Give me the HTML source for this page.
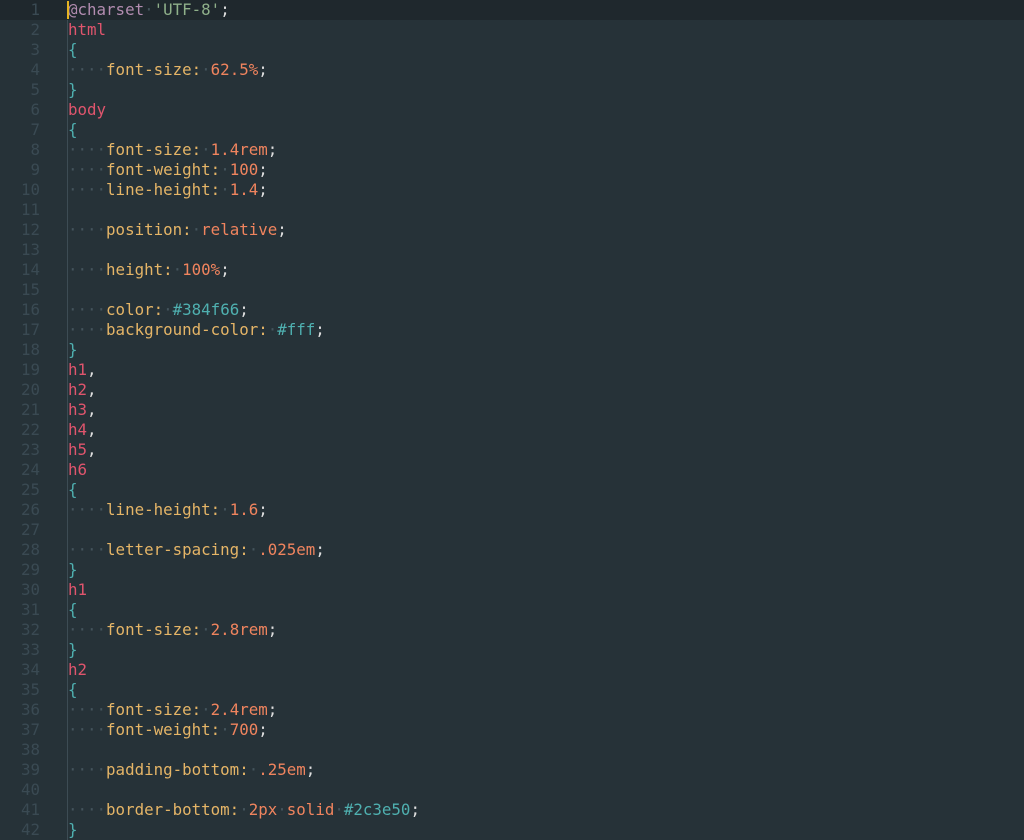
<!DOCTYPE html>
<html><head><meta charset="utf-8"><style>
html,body{margin:0;padding:0;background:#263238;width:1024px;height:840px;overflow:hidden}
.w{position:relative;font-family:"DejaVu Sans Mono","Liberation Mono",monospace;font-size:15.8px;}
.l{height:20px;line-height:20px;white-space:pre;position:relative}
.l1{background:#1f282d}
.n{position:absolute;left:0;width:40px;text-align:right;color:#3a4a53}
.c{position:absolute;left:68px;color:#cfd8dc}
.g{position:absolute;left:67px;top:0;width:1px;height:840px;background:#3d4c54}
.cur{position:absolute;left:67px;top:1px;width:2px;height:18px;background:#e6b422}
.d{color:#44545c}.p{color:#e5b567}.v{color:#f0845e}.h{color:#4fb0b0}.s{color:#e0556d}.b{color:#4fb0b0}.a{color:#b28cb0}.t{color:#8fb08a}.x{color:#e0e0e0}
</style></head><body><div class="w">
<div class="g"></div>
<div class="l l1"><span class="n">1</span><span class="c"><span class="a">@charset</span><span class="d">·</span><span class="t">'UTF-8'</span><span class="x">;</span></span><div class="cur"></div></div>
<div class="l"><span class="n">2</span><span class="c"><span class="s">html</span></span></div>
<div class="l"><span class="n">3</span><span class="c"><span class="b">{</span></span></div>
<div class="l"><span class="n">4</span><span class="c"><span class="d">····</span><span class="p">font-size:</span><span class="d">·</span><span class="v">62.5%</span><span class="x">;</span></span></div>
<div class="l"><span class="n">5</span><span class="c"><span class="b">}</span></span></div>
<div class="l"><span class="n">6</span><span class="c"><span class="s">body</span></span></div>
<div class="l"><span class="n">7</span><span class="c"><span class="b">{</span></span></div>
<div class="l"><span class="n">8</span><span class="c"><span class="d">····</span><span class="p">font-size:</span><span class="d">·</span><span class="v">1.4rem</span><span class="x">;</span></span></div>
<div class="l"><span class="n">9</span><span class="c"><span class="d">····</span><span class="p">font-weight:</span><span class="d">·</span><span class="v">100</span><span class="x">;</span></span></div>
<div class="l"><span class="n">10</span><span class="c"><span class="d">····</span><span class="p">line-height:</span><span class="d">·</span><span class="v">1.4</span><span class="x">;</span></span></div>
<div class="l"><span class="n">11</span></div>
<div class="l"><span class="n">12</span><span class="c"><span class="d">····</span><span class="p">position:</span><span class="d">·</span><span class="v">relative</span><span class="x">;</span></span></div>
<div class="l"><span class="n">13</span></div>
<div class="l"><span class="n">14</span><span class="c"><span class="d">····</span><span class="p">height:</span><span class="d">·</span><span class="v">100%</span><span class="x">;</span></span></div>
<div class="l"><span class="n">15</span></div>
<div class="l"><span class="n">16</span><span class="c"><span class="d">····</span><span class="p">color:</span><span class="d">·</span><span class="h">#384f66</span><span class="x">;</span></span></div>
<div class="l"><span class="n">17</span><span class="c"><span class="d">····</span><span class="p">background-color:</span><span class="d">·</span><span class="h">#fff</span><span class="x">;</span></span></div>
<div class="l"><span class="n">18</span><span class="c"><span class="b">}</span></span></div>
<div class="l"><span class="n">19</span><span class="c"><span class="s">h1</span><span class="x">,</span></span></div>
<div class="l"><span class="n">20</span><span class="c"><span class="s">h2</span><span class="x">,</span></span></div>
<div class="l"><span class="n">21</span><span class="c"><span class="s">h3</span><span class="x">,</span></span></div>
<div class="l"><span class="n">22</span><span class="c"><span class="s">h4</span><span class="x">,</span></span></div>
<div class="l"><span class="n">23</span><span class="c"><span class="s">h5</span><span class="x">,</span></span></div>
<div class="l"><span class="n">24</span><span class="c"><span class="s">h6</span></span></div>
<div class="l"><span class="n">25</span><span class="c"><span class="b">{</span></span></div>
<div class="l"><span class="n">26</span><span class="c"><span class="d">····</span><span class="p">line-height:</span><span class="d">·</span><span class="v">1.6</span><span class="x">;</span></span></div>
<div class="l"><span class="n">27</span></div>
<div class="l"><span class="n">28</span><span class="c"><span class="d">····</span><span class="p">letter-spacing:</span><span class="d">·</span><span class="v">.025em</span><span class="x">;</span></span></div>
<div class="l"><span class="n">29</span><span class="c"><span class="b">}</span></span></div>
<div class="l"><span class="n">30</span><span class="c"><span class="s">h1</span></span></div>
<div class="l"><span class="n">31</span><span class="c"><span class="b">{</span></span></div>
<div class="l"><span class="n">32</span><span class="c"><span class="d">····</span><span class="p">font-size:</span><span class="d">·</span><span class="v">2.8rem</span><span class="x">;</span></span></div>
<div class="l"><span class="n">33</span><span class="c"><span class="b">}</span></span></div>
<div class="l"><span class="n">34</span><span class="c"><span class="s">h2</span></span></div>
<div class="l"><span class="n">35</span><span class="c"><span class="b">{</span></span></div>
<div class="l"><span class="n">36</span><span class="c"><span class="d">····</span><span class="p">font-size:</span><span class="d">·</span><span class="v">2.4rem</span><span class="x">;</span></span></div>
<div class="l"><span class="n">37</span><span class="c"><span class="d">····</span><span class="p">font-weight:</span><span class="d">·</span><span class="v">700</span><span class="x">;</span></span></div>
<div class="l"><span class="n">38</span></div>
<div class="l"><span class="n">39</span><span class="c"><span class="d">····</span><span class="p">padding-bottom:</span><span class="d">·</span><span class="v">.25em</span><span class="x">;</span></span></div>
<div class="l"><span class="n">40</span></div>
<div class="l"><span class="n">41</span><span class="c"><span class="d">····</span><span class="p">border-bottom:</span><span class="d">·</span><span class="v">2px</span><span class="d">·</span><span class="v">solid</span><span class="d">·</span><span class="h">#2c3e50</span><span class="x">;</span></span></div>
<div class="l"><span class="n">42</span><span class="c"><span class="b">}</span></span></div>
</div></body></html>
